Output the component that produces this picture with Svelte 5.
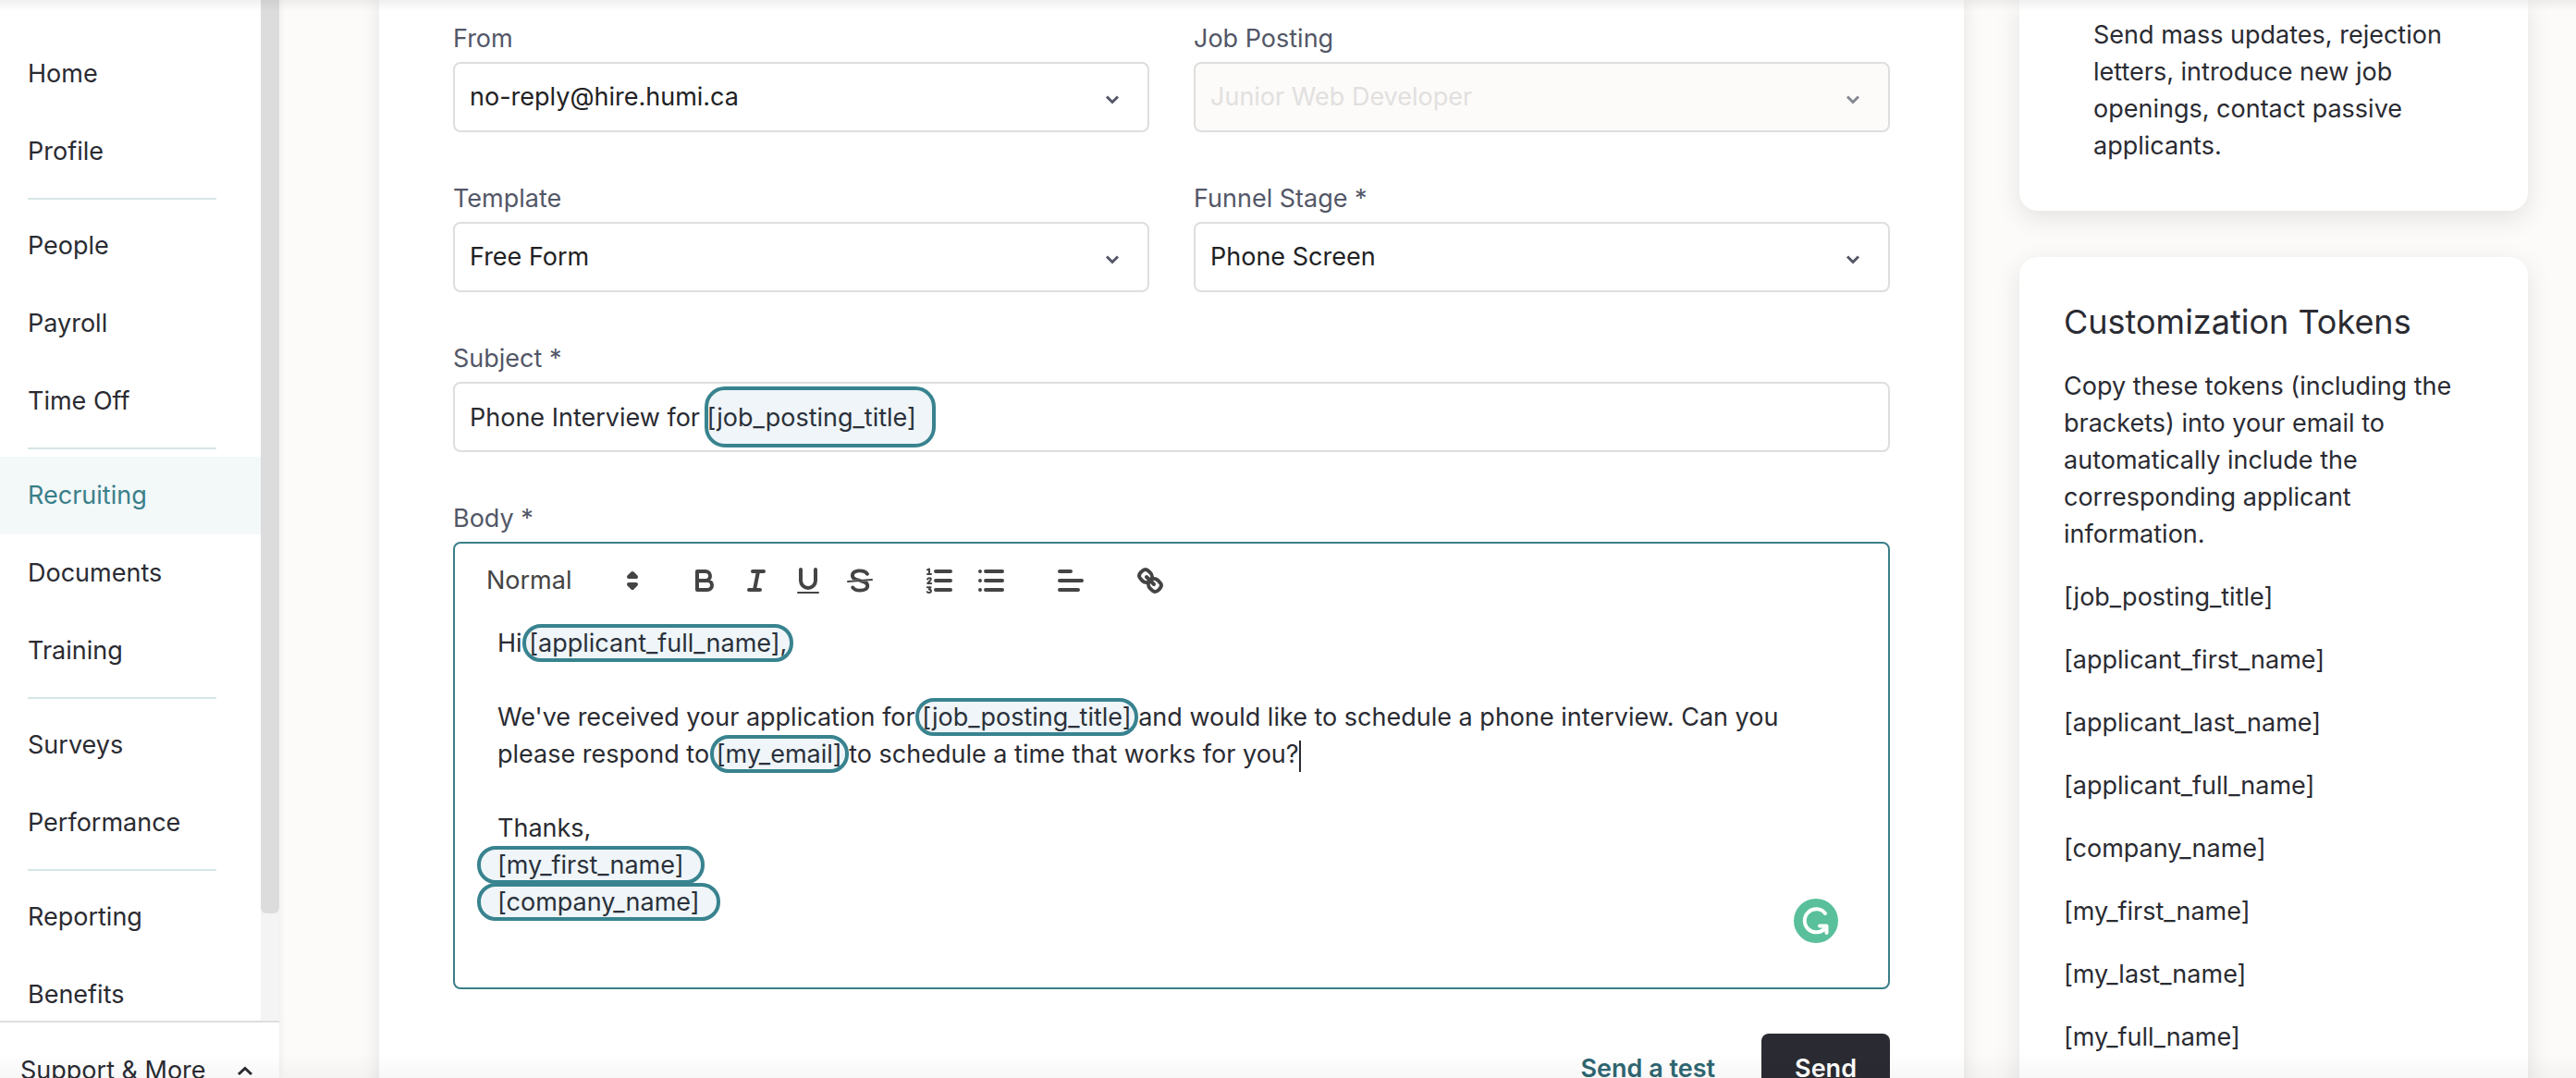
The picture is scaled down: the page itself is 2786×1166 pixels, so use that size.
<script>
  const navGroups = [
    ['Home', 'Profile'],
    ['People', 'Payroll', 'Time Off'],
    ['Recruiting', 'Documents', 'Training'],
    ['Surveys', 'Performance'],
    ['Reporting', 'Benefits'],
  ];
  const active = 'Recruiting';

  const selects = [
    { id: 'from', label: 'From', value: 'no-reply@hire.humi.ca' },
    { id: 'posting', label: 'Job Posting', value: 'Junior Web Developer', disabled: true },
    { id: 'template', label: 'Template', value: 'Free Form' },
    { id: 'stage', label: 'Funnel Stage *', value: 'Phone Screen' },
  ];

  const tokens = [
    '[job_posting_title]',
    '[applicant_first_name]',
    '[applicant_last_name]',
    '[applicant_full_name]',
    '[company_name]',
    '[my_first_name]',
    '[my_last_name]',
    '[my_full_name]',
  ];

  let subject = $state('Phone Interview for [job_posting_title]');
</script>

<div class="app">
  <div class="sidebar">
    <div class="scroller">
      <nav>
        {#each navGroups as group}
          <ul>
            {#each group as item}
              <li><a href="#{item}" class:active={item === active}>{item}</a></li>
            {/each}
          </ul>
        {/each}
      </nav>
      <div class="track"><div class="thumb"></div></div>
    </div>
    <button class="support" type="button">
      Support &amp; More
      <svg width="18" height="12" viewBox="0 0 18 12"><path d="M2 10 9 3.5 16 10" /></svg>
    </button>
  </div>

  <main>
    <form class="panel" onsubmit={(e) => e.preventDefault()}>
      <div class="row">
        {#each selects as s}
          <div class="field">
            <label for={s.id}>{s.label}</label>
            <div class="select">
              <select id={s.id} disabled={s.disabled}><option>{s.value}</option></select>
              <svg width="18" height="12" viewBox="0 0 18 12"><path d="M3 2.500 9 8.500 15 2.500" /></svg>
            </div>
          </div>
        {/each}
      </div>

      <div class="field">
        <label for="subject">Subject *</label>
        <div class="subject">
          <input id="subject" type="text" bind:value={subject} />
          <span class="ring"></span>
        </div>
      </div>

      <div class="field">
        <span class="label" id="body-label">Body *</span>
        <div class="editor">
          <div class="toolbar">
            <button type="button" class="format">
              Normal
              <svg viewBox="0 0 18 18"><path class="solid" d="M7 11 9 13 11 11zM7 7 9 5 11 7z" /></svg>
            </button>
            <div class="tools">
              <button type="button" aria-label="Bold">
                <svg viewBox="0 0 18 18"><path d="M5 4H9.5A2.5 2.5 0 0 1 9.5 9H5zM5 9H10.5A2.5 2.5 0 0 1 10.5 14H5z" /></svg>
              </button>
              <button type="button" aria-label="Italic">
                <svg viewBox="0 0 18 18"><path d="M7 4H13M5 14H11M8 14 10 4" /></svg>
              </button>
              <button type="button" aria-label="Underline">
                <svg viewBox="0 0 18 18"><path d="M5 3V9A4.012 4.012 0 0 0 9 13 4.012 4.012 0 0 0 13 9V3" /><rect class="fill" x="3" y="15" width="12" height="1" rx=".5" /></svg>
              </button>
              <button type="button" aria-label="Strikethrough">
                <svg viewBox="0 0 18 18">
                  <path class="fill" d="M9.966 8.214A10.14 10.14 0 0 0 8.9 7.921C6.7 7.4 6 6.9 6 6.2 6 5 7.3 4.6 9 4.6c1.6 0 2.6.5 3.2 1.4a1 1 0 0 0 1.7-1C12.900 3.500 11.300 2.800 9 2.800 6 2.800 4 4.100 4 6.200c0 1.100.5 1.900 1.400 2.500z" />
                  <path class="fill" d="M8 9.800a10 10 0 0 0 1.200.3c2.100.5 2.900 1 2.900 1.800 0 1.100-1.300 1.500-3.100 1.500-1.400 0-2.500-.4-3.100-1.300a1 1 0 0 0-1.700 1C5.200 14.500 6.800 15.200 9 15.200c3.100 0 5.100-1.200 5.100-3.300 0-1.200-.5-2-1.300-2.600z" />
                  <path class="thin" d="M2.500 9.500 15.500 8.500" />
                </svg>
              </button>
            </div>
            <div class="tools">
              <button type="button" aria-label="Numbered list">
                <svg viewBox="0 0 18 18">
                  <path d="M7 4H15M7 9H15M7 14H15" />
                  <path class="thin" d="M2.500 5.500H4.500M3.500 5.500V2.700L2.500 3.200M2.500 8.200C3 7.300 4.500 7.400 4.400 8.300 4.300 9 3.200 9.600 2.600 10.500H4.600M2.400 12.600H4.300L3.400 13.700C4.900 13.800 4.700 15.500 3.500 15.500 3 15.500 2.600 15.400 2.400 15.100" />
                </svg>
              </button>
              <button type="button" aria-label="Bulleted list">
                <svg viewBox="0 0 18 18"><path d="M6 4H15M6 9H15M6 14H15M3 4V4M3 9V9M3 14V14" /></svg>
              </button>
            </div>
            <div class="tools">
              <button type="button" aria-label="Align">
                <svg viewBox="0 0 18 18"><path d="M3 9H15M3 14H13M3 4H9" /></svg>
              </button>
            </div>
            <div class="tools">
              <button type="button" aria-label="Link">
                <svg viewBox="0 0 18 18">
                  <path d="M7 7 11 11" />
                  <path d="M8.900 4.577a3.476 3.476 0 0 1 .36 4.679A3.476 3.476 0 0 1 4.577 8.900C3.185 7.500 2.035 6.400 4.217 4.217S7.500 3.185 8.900 4.577Z" />
                  <path d="M13.423 9.100a3.476 3.476 0 0 0-4.679-.36 3.476 3.476 0 0 0 .36 4.679c1.392 1.392 2.500 2.542 4.679.36S14.815 10.500 13.423 9.100Z" />
                </svg>
              </button>
            </div>
          </div>

          <div class="text" role="textbox" tabindex="0" aria-multiline="true" aria-labelledby="body-label" contenteditable="true">
            <p>Hi <span class="token">[applicant_full_name],</span></p>
            <p><br /></p>
            <p>We've received your application for <span class="token">[job_posting_title]</span> and would like to schedule a phone interview. Can you please respond to <span class="token">[my_email]</span> to schedule a time that works for you?<span class="caret"></span></p>
            <p><br /></p>
            <p>Thanks,</p>
            <p><span class="token roomy">[my_first_name]</span></p>
            <p><span class="token roomy">[company_name]</span></p>
          </div>

          <svg class="checker" width="48" height="48" viewBox="0 0 48 48">
            <circle cx="24" cy="24" r="24" />
            <path d="M34 16A12.500 12.500 0 1 0 34.500 31M28 29.500H35.500V37" />
          </svg>
        </div>
      </div>

      <div class="actions">
        <button type="button" class="test">Send a test</button>
        <button type="submit" class="send">Send</button>
      </div>
    </form>

    <aside>
      <section class="card intro">
        <p>Send mass updates, rejection letters, introduce new job openings, contact passive applicants.</p>
      </section>
      <section class="card">
        <h2>Customization Tokens</h2>
        <p>Copy these tokens (including the brackets) into your email to automatically include the corresponding applicant information.</p>
        {#each tokens as token}
          <p>{token}</p>
        {/each}
      </section>
    </aside>
  </main>
</div>

<style>
  :global(body) {
    margin: 0;
    overflow: hidden;
  }

  .app {
    --ink: #2a2b32;
    --muted: #535767;
    --teal: #3a7f89;
    --ring: #38838f;
    --line: #dedede;
    position: relative;
    display: flex;
    height: 100vh;
    overflow: hidden;
    background: #fcfbf9;
    color: var(--ink);
    font: 27px/40px Inter, 'Liberation Sans', sans-serif;
  }

  /* soft edge shades where the scrolled page meets the window */
  .app::before,
  .app::after {
    content: '';
    position: absolute;
    inset: 0 0 auto;
    z-index: 2;
    height: 12px;
    background: linear-gradient(rgba(0, 0, 0, 0.06), transparent);
    pointer-events: none;
  }

  .app::after {
    inset: auto 0 0;
    height: 28px;
    background: linear-gradient(transparent, rgba(0, 0, 0, 0.03));
  }

  * {
    box-sizing: border-box;
  }

  button,
  input,
  select {
    font: inherit;
    color: inherit;
  }

  button {
    padding: 0;
    border: 0;
    background: none;
  }

  p,
  h2,
  ul {
    margin: 0;
    padding: 0;
  }

  .sidebar {
    display: flex;
    flex: none;
    flex-direction: column;
    width: 302px;
    background: #fff;
    box-shadow: 0 0 8px rgba(0, 0, 0, 0.08);
  }

  .scroller {
    display: flex;
    flex: 1;
    min-height: 0;
    overflow: hidden;
  }

  nav {
    flex: 1;
    padding-top: 38px;
  }

  ul {
    list-style: none;
  }

  ul + ul::before {
    content: '';
    display: block;
    height: 2px;
    margin: 8px 48px 8px 30px;
    background: #d6e5e7;
  }

  nav a {
    display: block;
    padding: 22px 30px;
    color: inherit;
    text-decoration: none;
  }

  nav a.active {
    background: #f3f8f9;
    color: var(--teal);
  }

  .track {
    width: 20px;
    background: #f4f4f4;
  }

  .thumb {
    height: 988px;
    border-radius: 0 0 6px 6px;
    background: #dcdcdc;
  }

  .support {
    display: flex;
    flex: none;
    align-items: center;
    justify-content: space-between;
    height: 62px;
    padding: 44px 28px 0 22px;
    border-top: 2px solid var(--line);
    white-space: nowrap;
  }

  .support svg {
    fill: none;
    stroke: var(--ink);
    stroke-width: 3;
  }

  main {
    display: flex;
    flex: 1;
    gap: 60px;
    min-width: 0;
    padding: 0 52px 0 108px;
  }

  .panel {
    display: flex;
    flex: 1;
    flex-direction: column;
    gap: 52px;
    min-width: 0;
    min-height: 1240px;
    padding: 22px 80px;
    background: #fff;
    box-shadow: 0 0 20px rgba(0, 0, 0, 0.1);
  }

  .row {
    display: grid;
    grid-template-columns: 1fr 1fr;
    gap: 52px 48px;
  }

  .field {
    display: flex;
    flex-direction: column;
    gap: 5px;
  }

  label,
  .label {
    color: var(--muted);
  }

  .select,
  .subject {
    position: relative;
    display: flex;
  }

  select,
  input {
    appearance: none;
    width: 100%;
    height: 76px;
    padding: 0 16px;
    border: 2px solid var(--line);
    border-radius: 8px;
    background: #fff;
  }

  select {
    color: #212123;
  }

  select:disabled {
    background: #fcfbf9;
    color: #e1e0df;
    opacity: 1;
  }

  .select svg {
    position: absolute;
    top: 35px;
    right: 31px;
    fill: none;
    stroke: var(--muted);
    stroke-width: 3;
    pointer-events: none;
  }

  select:disabled + svg {
    opacity: 0.7;
  }

  .ring {
    position: absolute;
    top: 5px;
    left: 272px;
    width: 250px;
    height: 66px;
    border: 4px solid var(--ring);
    border-radius: 22px;
    background: rgba(56, 131, 163, 0.08);
    pointer-events: none;
  }

  .editor {
    position: relative;
    min-height: 484px;
    padding: 22px 34px 0;
    border: 2px solid var(--teal);
    border-radius: 8px;
  }

  .toolbar {
    display: flex;
    align-items: center;
    height: 36px;
    color: #444;
  }

  .toolbar svg {
    display: block;
    width: 36px;
    height: 36px;
    fill: none;
    stroke: #444;
    stroke-width: 2;
    stroke-linecap: round;
    stroke-linejoin: round;
  }

  .toolbar .thin {
    stroke-width: 1;
  }

  .toolbar .fill {
    fill: #444;
    stroke: none;
  }

  .toolbar .solid {
    fill: #444;
    stroke-width: 2;
  }

  .format {
    display: flex;
    align-items: center;
    justify-content: space-between;
    width: 176px;
    margin-right: 42px;
  }

  .tools {
    display: flex;
    gap: 20px;
    margin-right: 50px;
  }

  .text {
    padding: 30px 44px 0 12px;
    outline: none;
  }

  .token {
    position: relative;
    white-space: nowrap;
  }

  .token::after {
    content: '';
    position: absolute;
    inset: -4px -7px;
    border: 4px solid var(--ring);
    border-radius: 20px;
    background: rgba(56, 131, 163, 0.08);
    pointer-events: none;
  }

  .token.roomy::after {
    inset: -4px -22px;
  }

  .caret {
    display: inline-block;
    width: 2px;
    height: 34px;
    margin-right: -2px;
    background: var(--ink);
    vertical-align: middle;
  }

  .checker {
    position: absolute;
    right: 54px;
    bottom: 48px;
    fill: #59c09b;
  }

  .checker path {
    fill: none;
    stroke: #fff;
    stroke-width: 4;
    stroke-linecap: round;
    stroke-linejoin: round;
  }

  .actions {
    display: flex;
    gap: 50px;
    justify-content: flex-end;
    margin-top: -4px;
    font-weight: 600;
  }

  .test {
    color: #2f6672;
  }

  .send {
    height: 76px;
    padding: 0 36px;
    border-radius: 8px;
    background: #2a2b32;
    color: #fff;
  }

  aside {
    display: flex;
    flex: none;
    flex-direction: column;
    gap: 50px;
    width: 550px;
  }

  .card {
    display: flex;
    flex-direction: column;
    gap: 28px;
    padding: 48px;
    border-radius: 20px;
    background: #fff;
    box-shadow: 0 8px 28px rgba(0, 0, 0, 0.1);
  }

  .intro {
    padding: 18px 80px 50px;
    border-radius: 0 0 20px 20px;
  }

  h2 {
    font-size: 36px;
    font-weight: 400;
    line-height: 44px;
  }
</style>
